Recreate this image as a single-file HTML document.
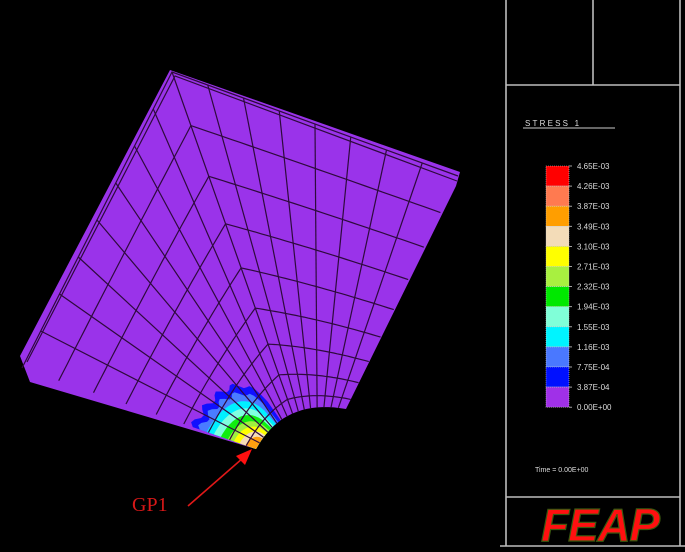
<!DOCTYPE html>
<html><head><meta charset="utf-8"><style>
html,body{margin:0;padding:0;background:#000;}
#w{position:relative;width:685px;height:552px;overflow:hidden;background:#000;}
svg{position:absolute;left:0;top:0;}
</style></head><body><div id="w">
<svg id="s" width="685" height="552" viewBox="0 0 685 552" xmlns="http://www.w3.org/2000/svg">
<g id="plate"></g>
<g id="mesh" stroke="#2e0a3c" stroke-width="1.2" fill="none"></g>
<text x="132" y="511" font-family="Liberation Serif, serif" font-size="20" fill="#d81818">GP1</text>
<line x1="188" y1="506" x2="243" y2="458" stroke="#e01818" stroke-width="1.6"/>
<polygon points="252,449 236,456 245,465" fill="#ff1010"/>
<g stroke="#bdbdbd" stroke-width="1.6" fill="none">
<line x1="506" y1="0" x2="506" y2="546"/>
<line x1="680" y1="0" x2="680" y2="546"/>
<line x1="593" y1="0" x2="593" y2="85"/>
<line x1="506" y1="85" x2="680" y2="85"/>
<line x1="506" y1="497" x2="680" y2="497"/>
<line x1="500" y1="546" x2="685" y2="546"/>
</g>
<text x="525" y="126" font-family="Liberation Sans, sans-serif" font-size="8" fill="#ddd" letter-spacing="2.2">STRESS 1</text>
<line x1="523" y1="128" x2="615" y2="128" stroke="#ccc" stroke-width="1"/>
<g id="leg"></g>
<text x="535" y="472" font-family="Liberation Sans, sans-serif" font-size="7" fill="#ddd">Time = 0.00E+00</text>
<text x="541" y="541" font-family="Liberation Sans, sans-serif" font-size="46" font-weight="bold" font-style="italic" fill="#ff1010" stroke="#3a5a10" stroke-width="1.2" letter-spacing="-1" textLength="118" lengthAdjust="spacingAndGlyphs">FEAP</text>
</svg>
</div>
<script>
(function(){
var NS="http://www.w3.org/2000/svg";
function el(p,n,a){var e=document.createElementNS(NS,n);for(var k in a)e.setAttribute(k,a[k]);p.appendChild(e);return e;}
var BL=[22,368],TL=[172,72],TR=[458,176];
var HS=[256,449],HC=[284,398],HE=[346,409];
function O(t){if(t<0.5){var u=t/0.5;return[BL[0]+(TL[0]-BL[0])*u,BL[1]+(TL[1]-BL[1])*u];}var u=(t-0.5)/0.5;return[TL[0]+(TR[0]-TL[0])*u,TL[1]+(TR[1]-TL[1])*u];}
function H(t){var a=(1-t)*(1-t),b=2*t*(1-t),c=t*t;return[a*HS[0]+b*HC[0]+c*HE[0],a*HS[1]+b*HC[1]+c*HE[1]];}
function P(t,s){var h=H(t),o=O(t);return[h[0]+(o[0]-h[0])*s,h[1]+(o[1]-h[1])*s];}
function f(p){return p[0].toFixed(1)+','+p[1].toFixed(1);}
var plate=document.getElementById('plate'),mesh=document.getElementById('mesh');
var pts=[[20,356],[170,70],[460,172],[456,186],HE];
for(var i=20;i>=0;i--)pts.push(H(i/20));
pts.push([30,382]);
el(plate,'polygon',{points:pts.map(f).join(' '),fill:'#9a33ea'});
// contour bands: [color, t1, smax]
var bands=[['#1010ff',0.36,0.27],['#4a7cff',0.33,0.24],['#00f0ff',0.30,0.21],['#80ffe0',0.27,0.18],['#10ee10',0.24,0.15],['#a0f040',0.21,0.12],['#ffff00',0.18,0.095],['#f5dcb8',0.15,0.07],['#ffa010',0.11,0.045]];
bands.forEach(function(b,j){var q=[],n=24;for(var i=0;i<=n;i++){var t=b[1]*i/n;var r=1-Math.pow(i/n,2.2);var s=b[2]*Math.sqrt(Math.max(r,0))*(1+(j<2?0.06*Math.sin(i*1.3):0));q.push(P(t,s));}for(var i=n;i>=0;i--){q.push(P(b[1]*i/n,0));}
el(plate,'polygon',{points:q.map(f).join(' '),fill:b[0]});});
el(mesh,'polyline',{points:'27,362 175,76 457,181'});
el(mesh,'polyline',{points:'22,368 172,72 458,176'});
var NR=9,NT=16;
function sk(k){return Math.pow(k/NR,1.45);}
for(var k=1;k<NR;k++){var q=[];for(var i=0;i<=60;i++)q.push(P(i/60,sk(k)));el(mesh,'polyline',{points:q.map(f).join(' ')});}
for(var i=1;i<NT;i++){var t=i/NT;var a=P(t,0),b=P(t,1);el(mesh,'line',{x1:a[0],y1:a[1],x2:b[0],y2:b[1]});}
var cols=['#ff0000','#ff7a50','#ff9e00','#f3dcb8','#ffff00','#a8f040','#00e800','#80ffd8','#00f4ff','#4a78ff','#0010ff','#a030e8'];
var labs=['4.65E-03','4.26E-03','3.87E-03','3.49E-03','3.10E-03','2.71E-03','2.32E-03','1.94E-03','1.55E-03','1.16E-03','7.75E-04','3.87E-04','0.00E+00'];
var leg=document.getElementById('leg');var y0=166,h=20.1;
for(var i=0;i<12;i++){el(leg,'rect',{x:546,y:y0+i*h,width:23,height:h,fill:cols[i],stroke:'#d0d0d0','stroke-width':0.6,'stroke-dasharray':'1,1'});}
for(var i=0;i<13;i++){var yy=y0+i*h;el(leg,'line',{x1:569,y1:yy,x2:572,y2:yy,stroke:'#ccc','stroke-width':0.8});var t=el(leg,'text',{x:577,y:yy+3,'font-family':'Liberation Sans, sans-serif','font-size':'8',fill:'#ddd'});t.textContent=labs[i];}
})();
</script>
</body></html>
